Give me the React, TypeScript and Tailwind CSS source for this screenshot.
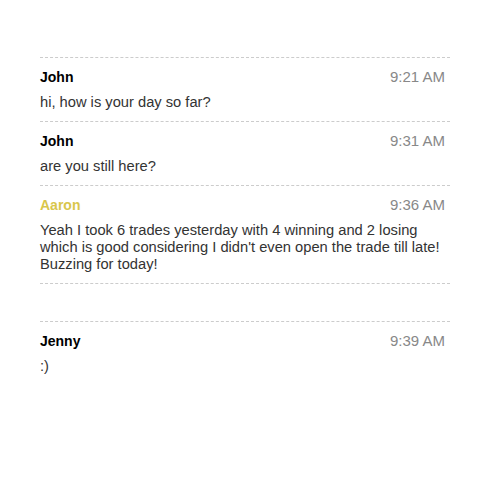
import React from 'react';

type Message = { name: string; time: string; text: string; highlight?: boolean };

const firstGroup: Message[] = [
  { name: 'John', time: '9:21 AM', text: 'hi, how is your day so far?' },
  { name: 'John', time: '9:31 AM', text: 'are you still here?' },
  {
    name: 'Aaron',
    time: '9:36 AM',
    text: "Yeah I took 6 trades yesterday with 4 winning and 2 losing which is good considering I didn't even open the trade till late! Buzzing for today!",
    highlight: true,
  },
];

const secondGroup: Message[] = [{ name: 'Jenny', time: '9:39 AM', text: ':)' }];

function ChatItem({ msg }: { msg: Message }) {
  return (
    <li className="border-t border-dashed border-[#cccccc] pt-[9px] pb-[10px]">
      <div className="flex items-center justify-between h-5">
        <span className={`text-[14px] font-bold ${msg.highlight ? 'text-[#d9c64b]' : 'text-black'}`}>
          {msg.name}
        </span>
        <span className="text-[15px] text-[#888888] pr-[5px]">{msg.time}</span>
      </div>
      <p className="mt-[7px] text-[14.7px] leading-[17px] text-[#333333]">{msg.text}</p>
    </li>
  );
}

export default function App() {
  return (
    <div className="w-[484px] h-[503px] bg-white font-['Liberation_Sans',Arial,sans-serif]">
      <div className="pt-[57px] pl-10 w-[450px]">
        <ul className="border-b border-dashed border-[#cccccc]">
          {firstGroup.map((m, i) => (
            <ChatItem key={i} msg={m} />
          ))}
        </ul>
        <ul className="mt-[37px]">
          {secondGroup.map((m, i) => (
            <ChatItem key={i} msg={m} />
          ))}
        </ul>
      </div>
    </div>
  );
}
